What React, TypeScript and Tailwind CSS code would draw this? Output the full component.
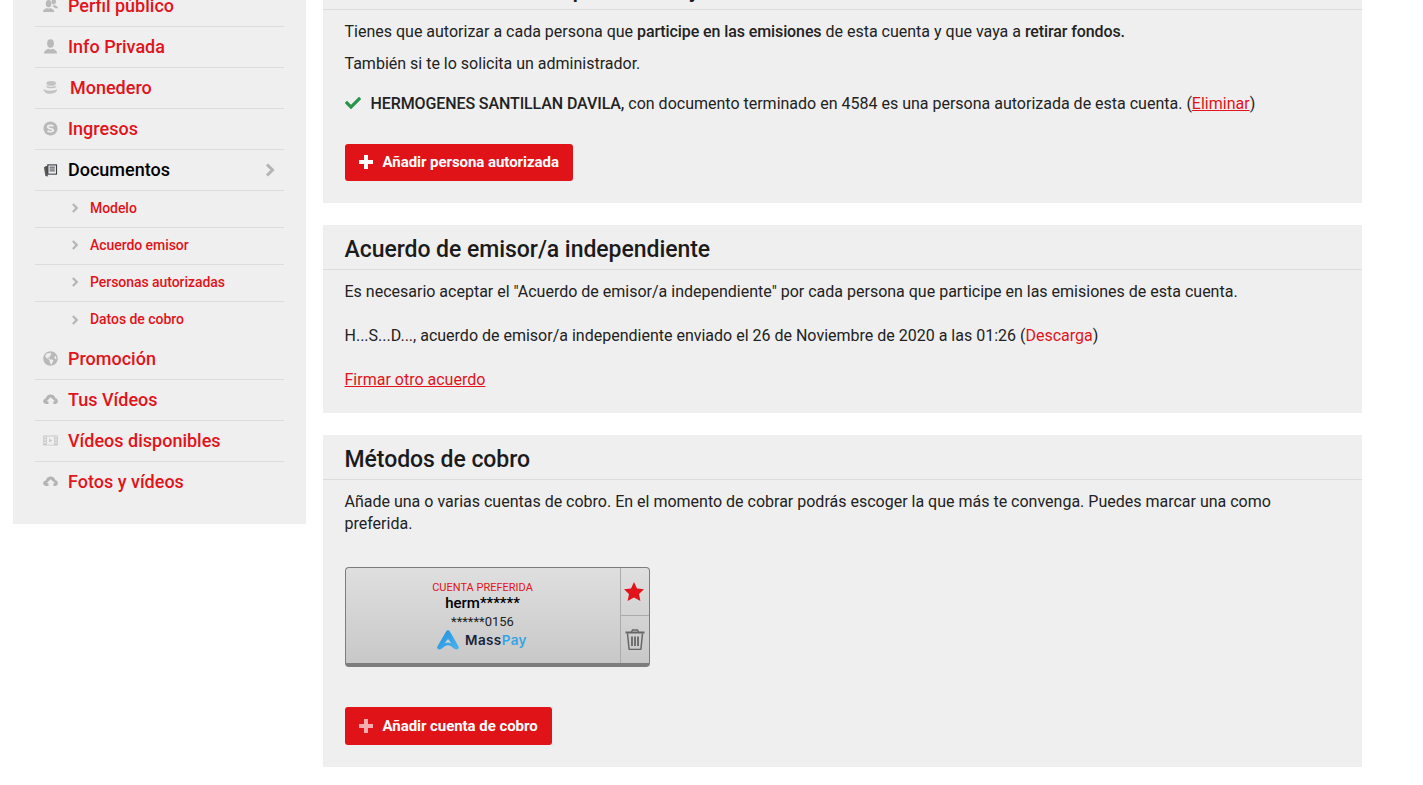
import type { ReactNode } from "react";
import { FaCheck, FaGlobeAmericas } from "react-icons/fa";

const UserIcon = () => (
  <svg viewBox="0 0 16 16" className="h-[15px] w-[15px]" fill="#b9b9b9">
    <ellipse cx="8" cy="4.800" rx="3.600" ry="4.500" />
    <path d="M1 15.500c0-3 2.200-3.800 4.800-5 1.400.9 3 .9 4.400 0 2.600 1.200 4.800 2 4.800 5z" />
  </svg>
);

const FriendsIcon = () => (
  <svg viewBox="0 0 16 16" className="h-[15px] w-[15px]" fill="#b9b9b9">
    <ellipse cx="6" cy="6" rx="3" ry="3.800" />
    <path d="M0 15c0-2.600 1.800-3.200 4-4.300 1.200.8 2.800.8 4 0 2.200 1.100 4 1.700 4 4.300z" />
    <ellipse cx="11.500" cy="3.800" rx="2.300" ry="3" />
    <path d="M10.500 7.600c.8.400 1.600.4 2.300 0 1.700.8 3.200 1.400 3.200 3.400h-3.200c-.5-1-1.300-1.500-2.300-2z" />
  </svg>
);

const CoinsIcon = () => (
  <svg viewBox="0 0 16 16" className="h-[15px] w-[15px]" fill="#c2c2c2">
    <ellipse cx="8.800" cy="3.600" rx="5" ry="2.600" />
    <path d="M3.600 5.800c1.200 1.700 9 1.900 10.500.1.500 1.500-.7 3-5.300 3-4 0-6-1.500-5.200-3.100z" />
    <path d="M.8 9c.5 2.800 11 3.300 14.200.7.400 2.500-2.300 5-7 5C3.200 14.700.100 12 .8 9z" />
  </svg>
);

const DollarIcon = () => (
  <svg viewBox="0 0 16 16" className="h-[15px] w-[15px]">
    <circle cx="8" cy="8" r="7.500" fill="#b9b9b9" />
    <path d="M11 5.600C10.200 4.500 5 4 5 6.300c0 2.500 6 1.200 6 3.600 0 2.100-5.300 1.700-6.100.5" fill="none" stroke="#efefef" strokeWidth="1.800" />
  </svg>
);

const DocsIcon = () => (
  <svg viewBox="0 0 16 16" className="h-[15px] w-[15px]">
    <path d="M1 5.500 4 4v10l2 1.500L2.500 15z" fill="#6b5a3c" />
    <path d="M2.800 4.500H5v10.500H3.600z" fill="#49505a" />
    <rect x="4.500" y="2.500" width="10.500" height="11" fill="#3c3f44" />
    <rect x="5.800" y="3.700" width="8" height="8.700" fill="#efefef" />
    <path d="M7 5.500h5.600M7 7.500h5.600M7 9.500h5.600" stroke="#3c3f44" strokeWidth="1" />
  </svg>
);

const CloudUpIcon = () => (
  <svg viewBox="0 0 16 12" className="h-[11px] w-[15px]" fill="#b4b4b4">
    <path d="M3.500 11C1.500 11 0 9.600 0 7.900c0-1.600 1.200-2.800 2.800-3C3.400 2.300 5.600.5 8.200.5c2.600 0 4.700 1.700 5.200 4.200 1.500.3 2.600 1.500 2.600 3.100 0 1.800-1.500 3.200-3.400 3.200h-1.400V8h2L8 3.500 3.800 8h2v3z" />
  </svg>
);

const FilmIcon = () => (
  <svg viewBox="0 0 16 12" className="h-[11px] w-[15px]" fill="#c9c9c9">
    <path d="M0 .5h16v11H0zm1 1v1.500h2V1.500zm0 3v1.500h2V4.500zm0 3V9h2V7.500zm0 0M13 1.500V3h2V1.500zm0 3V6h2V4.500zm0 3V9h2V7.500zM4 1.500v9h8v-9z" fillRule="evenodd" />
    <path d="M6.500 3.800v4.400L10 6z" />
  </svg>
);

const Chevron = ({ className }: { className: string }) => (
  <svg viewBox="0 0 10 14" className={className} fill="none" stroke="#b4b4b4" strokeWidth="3">
    <path d="M2 1.500 7.500 7 2 12.500" />
  </svg>
);

const PlusIcon = ({ soft }: { soft?: boolean }) => (
  <svg viewBox="0 0 14 14" className={`mr-[10px] h-[14px] w-[14px] ${soft ? "opacity-65" : ""}`} fill="#ffffff">
    <path d="M5 0h4v5h5v4H9v5H5V9H0V5h5z" />
  </svg>
);

const StarIcon = () => (
  <svg viewBox="0 0 20 19" className="h-[19px] w-[20px]" fill="#e2131a">
    <polygon points="10,0 13,6.500 20,7.200 15,12 16.400,19 10,15.500 3.600,19 5,12 0,7.200 7,6.500" />
  </svg>
);

const TrashIcon = () => (
  <svg viewBox="0 0 20 21" className="h-[21px] w-[20px]" fill="none" stroke="#666666">
    <path d="M6.500 3 7.500 1h5l1 2" strokeWidth="1.400" />
    <path d="M.5 3.500h19" strokeWidth="2" />
    <path d="M2.500 4.500 4 19.500c0 .5.500 1 1 1h10c.5 0 1-.5 1-1l1.500-15" strokeWidth="1.500" />
    <path d="M7 7.500v9.500M10 7.500v9.500M13 7.500v9.500" strokeWidth="1.800" />
  </svg>
);

const MenuRow = ({ icon, label, active, last, trailing, shifted }: { icon: ReactNode; label: string; active?: boolean; last?: boolean; trailing?: boolean; shifted?: boolean }) => (
  <div className={`flex h-[41px] items-center pb-[2px] ${last ? "" : "border-b border-[#dcdcdc]"}`}>
    <span className={`flex justify-start pl-[8px] ${shifted ? "w-[35px]" : "w-[33px]"}`}>{icon}</span>
    <span className={`text-[18px] font-medium ${active ? "text-black" : "text-[#e2131a]"}`}>{label}</span>
    {trailing && <Chevron className="ml-auto mr-[9px] h-[14px] w-[10px] translate-y-[1px]" />}
  </div>
);

const SubRow = ({ label, last }: { label: string; last?: boolean }) => (
  <div className={`flex h-[37px] items-center pb-[2px] pl-[36px] ${last ? "" : "border-b border-[#dcdcdc]"}`}>
    <Chevron className="mr-[11px] h-[10px] w-[8px]" />
    <span className="text-[14px] font-medium tracking-[-0.05px] text-[#e2131a]">{label}</span>
  </div>
);

const AddButton = ({ label, soft, height }: { label: string; soft?: boolean; height: string }) => (
  <button className={`flex items-center rounded-[3px] bg-[#e01318] pb-[1px] pl-[14px] pr-[14.500px] text-[15px] font-bold tracking-[-0.05px] text-white ${height}`}>
    <PlusIcon soft={soft} />
    {label}
  </button>
);

const Panel = ({ title, children }: { title: string; children: ReactNode }) => (
  <section className="bg-[#efefef]">
    <h2 className="flex h-[45px] items-center border-b border-[#dcdcdc] pl-[21.500px] pr-[22px] pt-[6px] text-[23px] font-medium tracking-[-0.05px] text-[#1b1b1b]">{title}</h2>
    <div className="pl-[21.500px] pr-[22px] text-[16px] leading-[22px] text-[#222222]">{children}</div>
  </section>
);

export default function App() {
  return (
    <div className="h-[785px] overflow-hidden bg-white font-['Roboto',sans-serif]">
      <div className="-mt-[35px] flex items-start gap-[17px] pl-[13px]">
        <aside className="w-[293px] shrink-0 bg-[#efefef] px-[22px] pb-[21px] pt-[21px]">
          <MenuRow icon={<FriendsIcon />} label="Perfil público" />
          <MenuRow icon={<UserIcon />} label="Info Privada" />
          <MenuRow icon={<CoinsIcon />} label="Monedero" shifted />
          <MenuRow icon={<DollarIcon />} label="Ingresos" />
          <MenuRow icon={<DocsIcon />} label="Documentos" active trailing />
          <SubRow label="Modelo" />
          <SubRow label="Acuerdo emisor" />
          <SubRow label="Personas autorizadas" />
          <SubRow label="Datos de cobro" last />
          <MenuRow icon={<FaGlobeAmericas className="text-[15px] text-[#b9b9b9]" />} label="Promoción" />
          <MenuRow icon={<CloudUpIcon />} label="Tus Vídeos" />
          <MenuRow icon={<FilmIcon />} label="Vídeos disponibles" />
          <MenuRow icon={<CloudUpIcon />} label="Fotos y vídeos" last />
        </aside>

        <main className="flex w-[1039px] flex-col gap-[22px]">
          <Panel title="Personas autorizadas para emitir y cobrar">
            <p className="pt-[11px]">
              Tienes que autorizar a cada persona que <b className="font-medium tracking-[-0.1px]">participe en las emisiones</b> de esta cuenta y que vaya a <b className="font-medium tracking-[-0.1px]">retirar fondos.</b>
            </p>
            <p className="pt-[10px]">También si te lo solicita un administrador.</p>
            <p className="flex items-center pt-[18px]">
              <FaCheck className="mr-[10px] -translate-y-[1px] text-[16px] text-[#27944a]" />
              <span>
                <b className="font-medium tracking-[-0.1px]">HERMOGENES SANTILLAN DAVILA,</b> con documento terminado en 4584 es una persona autorizada de esta cuenta. (<a className="text-[#e2131a] underline">Eliminar</a>)
              </span>
            </p>
            <div className="flex pb-[22px] pt-[29px]">
              <AddButton label="Añadir persona autorizada" height="h-[37px]" />
            </div>
          </Panel>

          <Panel title="Acuerdo de emisor/a independiente">
            <p className="pt-[11px]">Es necesario aceptar el "Acuerdo de emisor/a independiente" por cada persona que participe en las emisiones de esta cuenta.</p>
            <p className="pt-[22px]">
              H...S...D..., acuerdo de emisor/a independiente enviado el 26 de Noviembre de 2020 a las 01:26 (<a className="text-[#e2131a]">Descarga</a>)
            </p>
            <p className="pb-[22px] pt-[22px]">
              <a className="text-[#e2131a] underline">Firmar otro acuerdo</a>
            </p>
          </Panel>

          <Panel title="Métodos de cobro">
            <p className="pt-[11px]">Añade una o varias cuentas de cobro. En el momento de cobrar podrás escoger la que más te convenga. Puedes marcar una como preferida.</p>
            <div className="pt-[32px]">
              <div className="flex h-[100px] w-[305px] overflow-hidden rounded-[4px] border border-b-[4px] border-[#7d7d7d] bg-gradient-to-b from-[#dfdfdf] to-[#c8c8c8]">
                <div className="flex flex-1 flex-col items-center pt-[13px]">
                  <span className="text-[11px] leading-[14px] text-[#e2131a]">CUENTA PREFERIDA</span>
                  <span className="text-[15px] font-medium leading-[17px] text-black">herm******</span>
                  <span className="pt-[2px] text-[13px] leading-[16px] text-[#222222]">******0156</span>
                  <div className="-mt-[1px] flex items-center gap-[5px] pr-[2px]">
                    <svg viewBox="0 0 24 21" className="h-[20px] w-[24px]">
                      <defs>
                        <linearGradient id="massPayGrad" x1="0" y1="0" x2="1" y2="1">
                          <stop offset="0" stopColor="#1f8fdc" />
                          <stop offset="1" stopColor="#4db4ee" />
                        </linearGradient>
                      </defs>
                      <path d="M10 1.500c1-1.600 3-1.600 4 0l9 15.500c1 2-.2 3.500-2 3.500-3 0-5-4.500-9-4.500S6 20.500 3 20.500c-1.800 0-3-1.500-2-3.500z" fill="url(#massPayGrad)" />
                      <path d="M12 9.500 15.500 14c-1.200-.6-2.300-.9-3.500-.9s-2.300.3-3.500.9z" fill="#d4d4d4" />
                    </svg>
                    <span className="font-['Inter',sans-serif] text-[13.500px] font-semibold tracking-[0.4px] text-[#17233a]">
                      Mass<span className="text-[#35a5e5]">Pay</span>
                    </span>
                  </div>
                </div>
                <div className="flex w-[29px] flex-col border-l border-[#ababab]">
                  <div className="flex h-[48px] items-center justify-center border-b border-[#ababab] pr-[1px]">
                    <StarIcon />
                  </div>
                  <div className="flex flex-1 items-center justify-center">
                    <TrashIcon />
                  </div>
                </div>
              </div>
            </div>
            <div className="flex pb-[22px] pt-[40px]">
              <AddButton label="Añadir cuenta de cobro" height="h-[38px]" soft />
            </div>
          </Panel>
        </main>
      </div>
    </div>
  );
}
